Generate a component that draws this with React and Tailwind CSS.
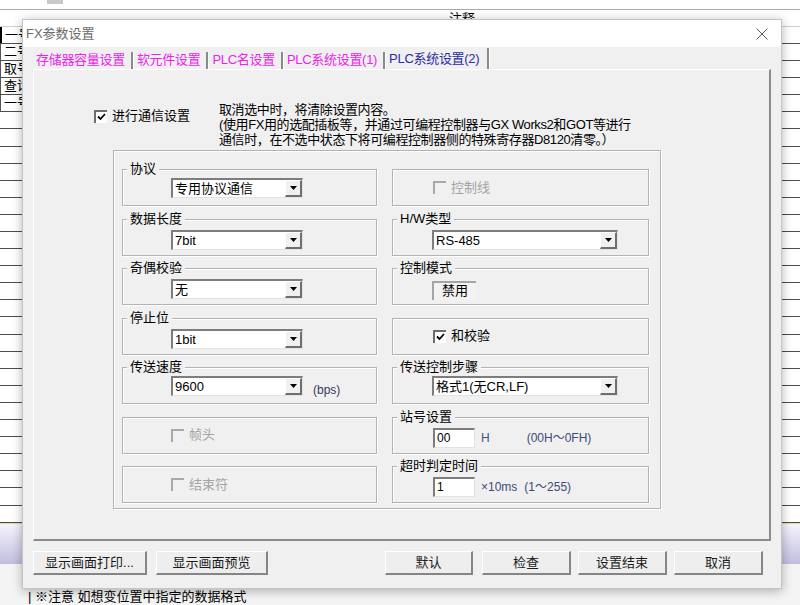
import React from 'react'

const leftRows = ["一号", "二号", "取号", "查询", "一号"]

function DropArrow() {
  return (
    <svg width="7" height="4" viewBox="0 0 7 4">
      <path d="M0 0h7L3.5 4z" fill="#000" />
    </svg>
  )
}

function Select({ value, className = "" }) {
  return (
    <div className={"flex h-[20px] bg-white border-t-2 border-l-2 border-t-[#7d7d7d] border-l-[#7d7d7d] border-r border-b border-r-[#e3e3e3] border-b-[#e3e3e3] " + className}>
      <span className="flex-1 pl-[2px] text-[13px] leading-[18px] text-black whitespace-nowrap overflow-hidden">{value}</span>
      <div className="w-[17px] h-full flex items-center justify-center bg-[#f0f0f0] border-t border-l border-t-white border-l-white border-r-2 border-b-2 border-r-[#6f6f6f] border-b-[#6f6f6f]">
        <DropArrow />
      </div>
    </div>
  )
}

function Check({ checked, disabled }) {
  return (
    <span className={"w-[13px] h-[13px] flex items-center justify-center border-t-2 border-l-2 " + (disabled ? "bg-[#f0f0f0] border-t-[#a8a8a8] border-l-[#a8a8a8]" : "bg-white border-t-[#6d6d6d] border-l-[#6d6d6d]")}>
      {checked && (
        <svg width="9" height="8" viewBox="0 0 9 8">
          <path d="M1 3.5l2.5 2.5L8 1" stroke="#000" strokeWidth="1.8" fill="none" />
        </svg>
      )}
    </span>
  )
}

function CheckRow({ label, checked, disabled, className = "" }) {
  return (
    <div className={"flex items-center h-full gap-[5px] " + className}>
      <Check checked={checked} disabled={disabled} />
      <span className={"text-[13px] leading-[16px] " + (disabled ? "text-[#a3a3a3]" : "text-black")}>{label}</span>
    </div>
  )
}

function Group({ label, children, className = "" }) {
  return (
    <div className={"relative border border-[#b3b3b3] shadow-[inset_1px_1px_0_#fff,1px_1px_0_#fff] " + className}>
      {label && (
        <span className="absolute -top-[9px] left-[4px] px-[3px] bg-[#f0f0f0] text-[13px] leading-[16px] text-black whitespace-nowrap">{label}</span>
      )}
      {children}
    </div>
  )
}

function Field({ value }) {
  return (
    <div className="w-[42px] h-[20px] bg-white border-t-2 border-l-2 border-t-[#7d7d7d] border-l-[#7d7d7d] border-r border-b border-r-[#e3e3e3] border-b-[#e3e3e3] pl-[2px] text-[12px] leading-[17px] text-black">
      {value}
    </div>
  )
}

function Button({ children, className = "" }) {
  return (
    <button className={"h-[24px] bg-[#eeeeee] border-t border-l border-t-white border-l-white border-r-2 border-b-2 border-r-[#858585] border-b-[#858585] text-[13px] leading-[20px] text-[#1a1a1a] " + className}>
      {children}
    </button>
  )
}

const tabs = ["存储器容量设置", "软元件设置", "PLC名设置", "PLC系统设置(1)"]

const App = () => {
  return (
    <div className="relative w-[800px] h-[605px] overflow-hidden bg-[#f7f7f7] font-['Liberation_Sans','Noto_Sans_CJK_SC',sans-serif]">
      {/* app behind the dialog */}
      <div className="flex flex-col h-full">
        <div className="h-[10px] bg-white border-b border-[#ababab]">
          <div className="ml-[47px] w-[16px] h-[4px] bg-[#c9c9c9]" />
        </div>
        <div className="h-[17px] bg-white border-b border-[#cfcfcf] flex">
          <span className="ml-[449px] text-[13px] leading-[18px] text-black">注释</span>
        </div>
        {Array.from({ length: 29 }).map((_, i) => (
          <div key={i} className="h-[17.3px] bg-white border-b border-[#4d4d4d] flex">
            <div className={"w-[24px] pl-[3px] text-[13px] leading-[16px] text-black whitespace-nowrap overflow-hidden " + (i === 0 ? "border-l-2 border-black" : i < 5 ? "border-l border-[#555]" : "")}>
              {leftRows[i] || ""}
            </div>
          </div>
        ))}
        <div className="h-[42px] border-t border-[#e6d9a0] bg-gradient-to-b from-[#f6f5fb] to-[#c1bddf]" />
        <div className="flex-1 bg-[#f4f4f4] flex flex-col">
          <div className="flex pl-[139px] gap-[5px]">
            <div className="w-[64px] h-[17px] border-b-2 border-r-2 border-[#6e6e6e]" />
            <div className="w-[64px] h-[17px] border-b-2 border-r-2 border-[#6e6e6e]" />
          </div>
          <div className="pl-[28px] pt-[8px] text-[13px] leading-[16px] text-black whitespace-nowrap">| ※注意 如想变位置中指定的数据格式</div>
        </div>
      </div>

      {/* dialog window */}
      <div className="absolute left-[22px] top-[19px] w-[760px] h-[570px] bg-[#f0f0f0] border border-[#c4c4c4] shadow-[0_2px_10px_rgba(0,0,0,0.3)] flex flex-col">
        <div className="h-[27px] bg-white flex items-center justify-between pl-[3px] pr-[13px]">
          <span className="text-[13px] text-[#6b6b6b]">FX参数设置</span>
          <svg width="12" height="12" viewBox="0 0 12 12">
            <path d="M0.5 0.5l11 11M11.5 0.5l-11 11" stroke="#5a5a5a" strokeWidth="1" />
          </svg>
        </div>

        <div className="h-[22px] flex items-end pl-[10px]">
          {tabs.map((t) => (
            <div key={t} className="flex items-center h-[18px]">
              <span className="pl-[3px] pr-[6px] text-[13px] leading-[16px] tracking-[-0.3px] text-[#ee22ee] whitespace-nowrap">{t}</span>
              <div className="w-[3px] h-[17px] border-l-2 border-l-[#8a8a8a] border-r border-r-white" />
            </div>
          ))}
          <div className="flex items-center h-[20px]">
            <span className="pl-[3px] pr-[8px] text-[13px] leading-[16px] tracking-[-0.3px] text-[#2b2ba6] whitespace-nowrap">PLC系统设置(2)</span>
            <div className="w-[3px] h-[22px] border-l-2 border-l-[#8a8a8a] border-r border-r-white" />
          </div>
        </div>

        <div className="ml-[10px] w-[738px] h-[472px] border-t border-l border-t-white border-l-white border-r-2 border-b-2 border-r-[#8c8c8c] border-b-[#8c8c8c] pt-[32px]">
          <div className="flex">
            <div className="w-[185px] pl-[60px] pt-[6px]">
              <div className="flex items-center gap-[5px] h-[16px]">
                <Check checked />
                <span className="text-[13px] leading-[16px] text-black whitespace-nowrap">进行通信设置</span>
              </div>
            </div>
            <div className="text-[13px] leading-[15px] tracking-[-0.4px] text-black whitespace-nowrap">
              取消选中时，将清除设置内容。<br />
              (使用FX用的选配插板等，并通过可编程控制器与GX Works2和GOT等进行<br />
              通信时，在不选中状态下将可编程控制器侧的特殊寄存器D8120清零。）
            </div>
          </div>

          <Group className="ml-[79px] mt-[3px] w-[548px] h-[359px] pt-[18px] pl-[8px]">
            <div className="grid grid-cols-[255px_257px] gap-x-[15px] gap-y-[12.5px] auto-rows-[37px]">
              <Group label="协议">
                <Select value="专用协议通信" className="w-[132px] ml-[48px] mt-[8px]" />
              </Group>
              <Group>
                <CheckRow label="控制线" disabled className="pl-[40px]" />
              </Group>

              <Group label="数据长度">
                <Select value="7bit" className="w-[132px] ml-[48px] mt-[10px]" />
              </Group>
              <Group label="H/W类型">
                <Select value="RS-485" className="w-[186px] ml-[39px] mt-[10px]" />
              </Group>

              <Group label="奇偶校验">
                <Select value="无" className="w-[132px] ml-[48px] mt-[10px]" />
              </Group>
              <Group label="控制模式">
                <div className="ml-[39px] mt-[12px] w-[44px] h-[19px] bg-[#f3f3f3] border-t-2 border-l-2 border-t-[#a5a5a5] border-l-[#a5a5a5] text-center text-[13px] leading-[16px] text-black">禁用</div>
              </Group>

              <Group label="停止位">
                <Select value="1bit" className="w-[132px] ml-[48px] mt-[10px]" />
              </Group>
              <Group>
                <CheckRow label="和校验" checked className="pl-[40px]" />
              </Group>

              <Group label="传送速度">
                <div className="flex items-end ml-[48px] mt-[8px]">
                  <Select value="9600" className="w-[132px]" />
                  <span className="ml-[10px] text-[12px] leading-[16px] text-[#333a5c] translate-y-[2px]">(bps)</span>
                </div>
              </Group>
              <Group label="传送控制步骤">
                <Select value="格式1(无CR,LF)" className="w-[186px] ml-[39px] mt-[8px]" />
              </Group>

              <Group>
                <CheckRow label="帧头" disabled className="pl-[48px]" />
              </Group>
              <Group label="站号设置">
                <div className="flex items-center ml-[40px] mt-[10px]">
                  <Field value="00" />
                  <span className="ml-[6px] text-[12px] text-[#3e5287]">H</span>
                  <span className="ml-[37px] text-[12px] text-[#3c4a78] whitespace-nowrap">(00H～0FH)</span>
                </div>
              </Group>

              <Group>
                <CheckRow label="结束符" disabled className="pl-[48px]" />
              </Group>
              <Group label="超时判定时间">
                <div className="flex items-center ml-[40px] mt-[10px]">
                  <Field value="1" />
                  <span className="ml-[6px] text-[12px] text-[#3c4a78] whitespace-nowrap">×10ms</span>
                  <span className="ml-[7px] text-[12px] text-[#3c4a78] whitespace-nowrap">(1～255)</span>
                </div>
              </Group>
            </div>
          </Group>
        </div>

        <div className="mt-[10px] flex pl-[10px]">
          <Button className="w-[114px]">显示画面打印...</Button>
          <Button className="w-[112px] ml-[9px]">显示画面预览</Button>
          <Button className="w-[88px] ml-[117px]">默认</Button>
          <Button className="w-[89px] ml-[9px]">检查</Button>
          <Button className="w-[89px] ml-[7px]">设置结束</Button>
          <Button className="w-[89px] ml-[7px]">取消</Button>
        </div>
      </div>
    </div>
  )
}

export default App
